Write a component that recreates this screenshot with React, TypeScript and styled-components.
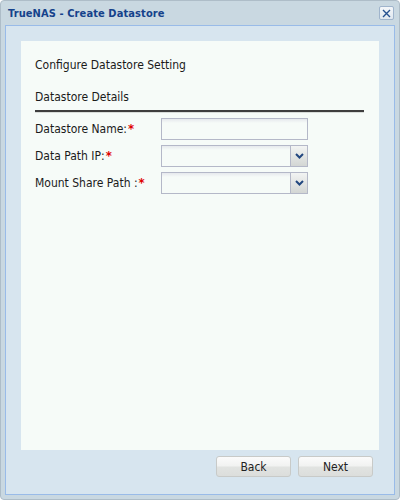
import React from "react";
import styled, { createGlobalStyle } from "styled-components";

const GlobalStyle = createGlobalStyle`
  html, body {
    margin: 0;
    padding: 0;
    background: #ffffff;
  }
  * {
    box-sizing: border-box;
  }
`;

const StyledWindow = styled.div`
  width: 400px;
  height: 500px;
  display: flex;
  flex-direction: column;
  background: #c9d8e1;
  border: 1px solid #aebdc8;
  border-radius: 4px;
  padding: 0 4px 4px 4px;
  font-family: "DejaVu Sans", Tahoma, sans-serif;
`;

const StyledTitleBar = styled.div`
  height: 24px;
  display: flex;
  align-items: center;
  justify-content: space-between;
  padding: 0 0 0 3px;
`;

const StyledTitle = styled.span`
  font-family: "DejaVu Sans Condensed", "DejaVu Sans", sans-serif;
  font-weight: bold;
  font-size: 11px;
  letter-spacing: 0.1px;
  color: #15428b;
`;

const StyledClose = styled.button`
  width: 15px;
  height: 14px;
  padding: 0;
  margin: 0 1px 0 0;
  display: flex;
  align-items: center;
  justify-content: center;
  border: 1px solid #9fb4cc;
  border-radius: 2px;
  background: linear-gradient(#f4f7fa, #dfe7ef);
`;

const StyledBody = styled.div`
  flex: 1;
  display: flex;
  flex-direction: column;
  background: #d7e5ef;
  border: 1px solid #99bbe8;
  padding: 15px 15px 17px 15px;
`;

const StyledPanel = styled.div`
  flex: 1;
  background: #f6fbf8;
  padding: 17px 15px 0 14px;
  font-family: "DejaVu Sans Condensed", "DejaVu Sans", sans-serif;
  font-size: 12px;
  color: #1a1a1a;
`;

const StyledIntro = styled.div`
  line-height: 14px;
  margin-bottom: 18px;
`;

const StyledSection = styled.div`
  line-height: 14px;
  padding-bottom: 6px;
  border-bottom: 2px solid #3e3e3e;
  box-shadow: 0 1px 0 #d8dcd9;
  margin-bottom: 6px;
`;

const StyledForm = styled.div`
  display: grid;
  grid-template-columns: 126px 147px;
  row-gap: 5px;
  align-items: center;
`;

const StyledLabel = styled.label`
  line-height: 22px;
`;

const StyledRequired = styled.span`
  color: #e00000;
  font-weight: bold;
  font-size: 13px;
  margin-left: 1px;
`;

const StyledInput = styled.div`
  height: 22px;
  display: flex;
  border: 1px solid #b4b8c8;
  background: linear-gradient(#e6e9ed 0px, #f6fbf8 4px);
`;

const StyledTrigger = styled.div`
  width: 17px;
  margin-left: auto;
  display: flex;
  align-items: center;
  justify-content: center;
  border-left: 1px solid #b4b8c8;
  background: linear-gradient(#f2f4f3, #d3d6d4);
`;

const StyledFooter = styled.div`
  display: flex;
  justify-content: flex-end;
  gap: 7px;
  padding: 6px 6px 0 0;
`;

const StyledButton = styled.button`
  width: 75px;
  height: 21px;
  padding: 0;
  border: 1px solid #c8cac8;
  border-radius: 3px;
  background: linear-gradient(#fbfbfb 0%, #f1f2f1 48%, #e1e3e1 52%, #dcdedc 100%);
  font-family: "DejaVu Sans Condensed", "DejaVu Sans", sans-serif;
  font-size: 12px;
  color: #222222;
`;

const Chevron = () => (
  <svg width="9" height="6" viewBox="0 0 9 6">
    <path d="M1 1 L4.5 4.5 L8 1" fill="none" stroke="#22477f" strokeWidth="2" />
  </svg>
);

const CloseIcon = () => (
  <svg width="9" height="9" viewBox="0 0 9 9">
    <path d="M1 1 L8 8 M8 1 L1 8" stroke="#24508f" strokeWidth="1.4" />
  </svg>
);

const fields = [
  { label: "Datastore Name:", combo: false },
  { label: "Data Path IP:", combo: true },
  { label: "Mount Share Path :", combo: true },
];

const App = () => {
  return (
    <>
      <GlobalStyle />
      <StyledWindow>
        <StyledTitleBar>
          <StyledTitle>TrueNAS - Create Datastore</StyledTitle>
          <StyledClose aria-label="close">
            <CloseIcon />
          </StyledClose>
        </StyledTitleBar>
        <StyledBody>
          <StyledPanel>
            <StyledIntro>Configure Datastore Setting</StyledIntro>
            <StyledSection>Datastore Details</StyledSection>
            <StyledForm>
              {fields.map((f) => (
                <React.Fragment key={f.label}>
                  <StyledLabel>
                    {f.label}
                    <StyledRequired>*</StyledRequired>
                  </StyledLabel>
                  <StyledInput>
                    {f.combo && (
                      <StyledTrigger>
                        <Chevron />
                      </StyledTrigger>
                    )}
                  </StyledInput>
                </React.Fragment>
              ))}
            </StyledForm>
          </StyledPanel>
          <StyledFooter>
            <StyledButton>Back</StyledButton>
            <StyledButton>Next</StyledButton>
          </StyledFooter>
        </StyledBody>
      </StyledWindow>
    </>
  );
};

export default App;
